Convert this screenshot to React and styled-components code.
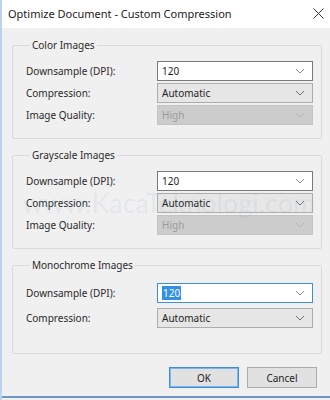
import styled, { createGlobalStyle } from 'styled-components';

const GlobalStyle = createGlobalStyle`
  html, body {
    margin: 0;
    padding: 0;
    background: #f0f0f0;
  }
  * {
    box-sizing: border-box;
  }
`;

const Window = styled.div`
  position: relative;
  width: 330px;
  height: 400px;
  display: flex;
  flex-direction: column;
  background: #f0f0f0;
  border-left: 2px solid #bcd3ec;
  font-family: "Noto Sans", sans-serif;
  font-size: 10px;
  color: #1e1e1e;
  overflow: hidden;
`;

const TitleBar = styled.div`
  height: 28px;
  flex: none;
  display: flex;
  align-items: center;
  justify-content: space-between;
  padding: 0 6px 1px 6px;
  background: #ffffff;
  font-size: 11px;
  color: #222;
`;

const Body = styled.div`
  flex: 1;
  display: flex;
  flex-direction: column;
  padding: 9px 8px 0 10px;
`;

const Group = styled.fieldset`
  margin: 0 0 ${(p) => p.$after}px 0;
  min-width: 0;
  border: 1px solid #dadada;
  border-radius: 2px;
  padding: ${(p) => p.$top}px 8px ${(p) => p.$bottom}px 13px;
  display: flex;
  flex-direction: column;
  gap: ${(p) => p.$gap}px;
`;

const Legend = styled.legend`
  margin-left: 4px;
  padding: 0 2px;
  line-height: 16px;
  color: #2a2a2a;
`;

const Row = styled.div`
  display: flex;
  align-items: center;
  justify-content: space-between;
  height: 20px;
`;

const Label = styled.span`
  color: #2a2a2a;
`;

const variants = {
  edit: { bg: '#ffffff', border: '#7a7a7a', color: '#1e1e1e', arrow: '#8a8a8a' },
  combo: { bg: '#e6e6e6', border: '#adadad', color: '#1e1e1e', arrow: '#707070' },
  disabled: { bg: '#cccccc', border: '#c4c4c4', color: '#9c9c9c', arrow: '#b5b5b5' },
  focus: { bg: '#ffffff', border: '#3d8ee0', color: '#1e1e1e', arrow: '#8a8a8a' },
};

const Select = styled.div`
  width: 156px;
  height: 20px;
  display: flex;
  align-items: center;
  justify-content: space-between;
  padding: 0 7px 0 4px;
  background: ${(p) => variants[p.$kind].bg};
  border: 1px solid ${(p) => variants[p.$kind].border};
  color: ${(p) => variants[p.$kind].color};
`;

const Highlight = styled.span`
  background: #3390e8;
  color: #fff;
  padding: 0 1px;
  line-height: 14px;
`;

const Footer = styled.div`
  display: flex;
  justify-content: flex-end;
  gap: 8px;
  padding: 13px 5px 0 0;
`;

const Button = styled.button`
  width: 70px;
  height: 21px;
  padding: 0;
  font-family: inherit;
  font-size: 10px;
  color: #1e1e1e;
  background: #e1e1e1;
  border: 1px solid ${(p) => (p.$primary ? '#3d8ee0' : '#adadad')};
  box-shadow: ${(p) => (p.$primary ? 'inset 0 0 0 1px #7fb4e8' : 'none')};
`;

const BottomEdge = styled.div`
  height: 2px;
  margin-bottom: 2px;
  background: #6f97c9;
`;

const Watermark = styled.div`
  position: absolute;
  left: 20px;
  top: 186px;
  font-family: Lato, sans-serif;
  font-size: 27px;
  color: rgba(110, 150, 190, 0.1);
  pointer-events: none;
  white-space: nowrap;
`;

const Chevron = ({ color }) => (
  <svg width="10" height="6" viewBox="0 0 10 6">
    <path d="M1 1 L5 5 L9 1" fill="none" stroke={color} strokeWidth="1" />
  </svg>
);

const Close = () => (
  <svg width="11" height="11" viewBox="0 0 11 11">
    <path d="M0.5 0.5 L10.5 10.5 M10.5 0.5 L0.5 10.5" stroke="#333" strokeWidth="1" />
  </svg>
);

const Field = ({ label, value, kind }) => (
  <Row>
    <Label>{label}</Label>
    <Select $kind={kind}>
      {kind === 'focus' ? <Highlight>{value}</Highlight> : <span>{value}</span>}
      <Chevron color={variants[kind].arrow} />
    </Select>
  </Row>
);

const groups = [
  {
    title: 'Color Images',
    fields: [
      ['Downsample (DPI):', '120', 'edit'],
      ['Compression:', 'Automatic', 'combo'],
      ['Image Quality:', 'High', 'disabled'],
    ],
    top: 8,
    gap: 2,
    bottom: 13,
    after: 8,
  },
  {
    title: 'Grayscale Images',
    fields: [
      ['Downsample (DPI):', '120', 'edit'],
      ['Compression:', 'Automatic', 'combo'],
      ['Image Quality:', 'High', 'disabled'],
    ],
    top: 8,
    gap: 2,
    bottom: 13,
    after: 8,
  },
  {
    title: 'Monochrome Images',
    fields: [
      ['Downsample (DPI):', '120', 'focus'],
      ['Compression:', 'Automatic', 'combo'],
    ],
    top: 10,
    gap: 5,
    bottom: 25,
    after: 0,
  },
];

export default function App() {
  return (
    <>
      <GlobalStyle />
      <Window>
        <TitleBar>
          <span>Optimize Document - Custom Compression</span>
          <Close />
        </TitleBar>
        <Body>
          {groups.map((g) => (
            <Group key={g.title} $top={g.top} $gap={g.gap} $bottom={g.bottom} $after={g.after}>
              <Legend>{g.title}</Legend>
              {g.fields.map(([label, value, kind]) => (
                <Field key={label} label={label} value={value} kind={kind} />
              ))}
            </Group>
          ))}
          <Footer>
            <Button $primary>OK</Button>
            <Button>Cancel</Button>
          </Footer>
        </Body>
        <BottomEdge />
        <Watermark>www.KacaTeknologi.com</Watermark>
      </Window>
    </>
  );
}
